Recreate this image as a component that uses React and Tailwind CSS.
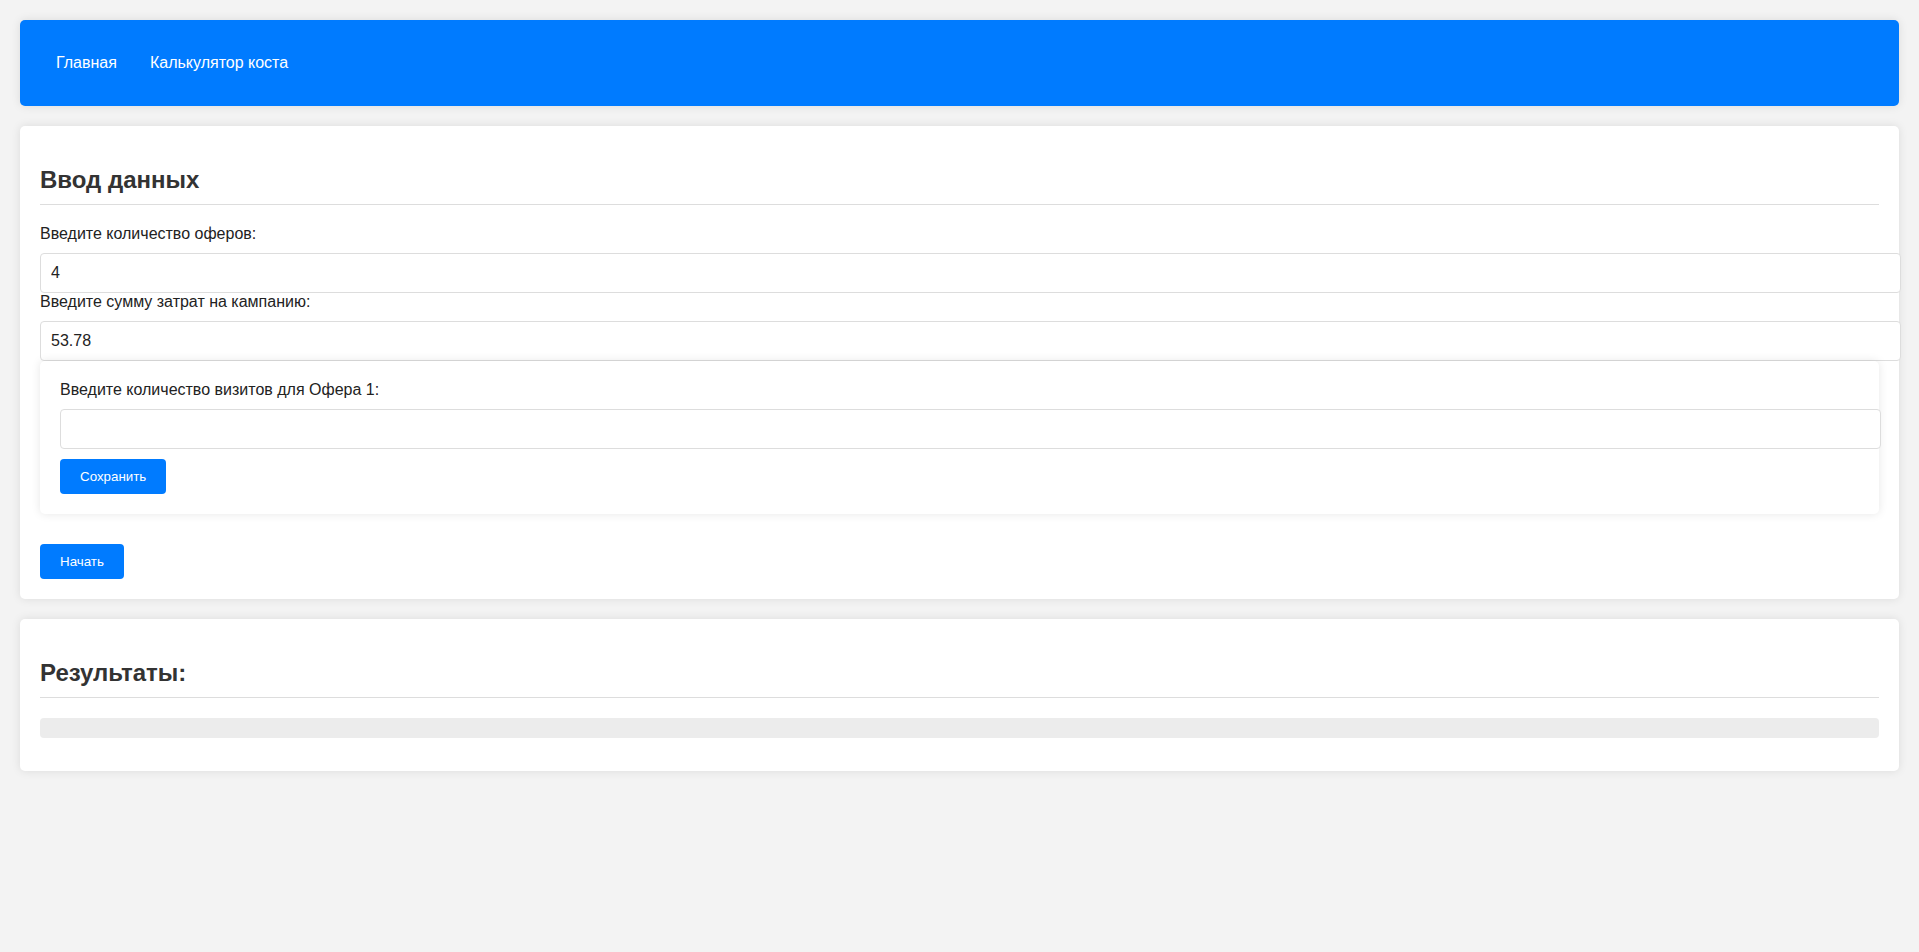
import { useState } from "react";

const NAV_LINKS = ["Главная", "Калькулятор коста"];

function Card({ children }) {
  return (
    <section className="bg-white rounded-[5px] shadow-[0_0_10px_rgba(0,0,0,0.1)] p-5">
      {children}
    </section>
  );
}

function Heading({ children }) {
  return (
    <h2 className="mt-5 mb-5 text-[24px] leading-[28px] font-bold text-[#333] pb-[10px] border-b border-[#ddd]">
      {children}
    </h2>
  );
}

function Field({ label, value, onChange }) {
  return (
    <>
      <label className="block text-[16px] leading-[18px] text-[#222] mb-[10px]">{label}</label>
      <input
        type="text"
        value={value}
        onChange={(e) => onChange(e.target.value)}
        className="block box-content w-full h-[18px] p-[10px] text-[16px] leading-[18px] text-[#222] bg-white border border-[#ddd] rounded-[4px] outline-none"
      />
    </>
  );
}

function Button({ children }) {
  return (
    <button className="block bg-[#007bff] text-white text-[13.33px] leading-[15px] px-5 py-[10px] rounded-[4px] cursor-pointer">
      {children}
    </button>
  );
}

export default function App() {
  const [offers, setOffers] = useState("4");
  const [budget, setBudget] = useState("53.78");
  const [visits, setVisits] = useState("");

  return (
    <div className="min-h-screen bg-[#f3f3f3] p-5 font-['Liberation_Sans',Arial,sans-serif] flex flex-col gap-5">
      <nav className="h-[86px] bg-[#007bff] rounded-[5px] shadow-[0_0_10px_rgba(0,0,0,0.1)] px-5 flex items-center gap-px">
        {NAV_LINKS.map((link) => (
          <a key={link} href="#" className="px-4 text-white text-[16px] leading-[18px]">
            {link}
          </a>
        ))}
      </nav>

      <Card>
        <Heading>Ввод данных</Heading>
        <Field label="Введите количество оферов:" value={offers} onChange={setOffers} />
        <Field label="Введите сумму затрат на кампанию:" value={budget} onChange={setBudget} />

        <div className="bg-white rounded-[5px] shadow-[0_0_10px_rgba(0,0,0,0.1)] p-5 mb-[30px]">
          <Field label="Введите количество визитов для Офера 1:" value={visits} onChange={setVisits} />
          <div className="mt-[10px]">
            <Button>Сохранить</Button>
          </div>
        </div>

        <Button>Начать</Button>
      </Card>

      <Card>
        <Heading>Результаты:</Heading>
        <div className="h-5 bg-[#ececec] rounded-[4px] mb-[13px]" />
      </Card>
    </div>
  );
}
